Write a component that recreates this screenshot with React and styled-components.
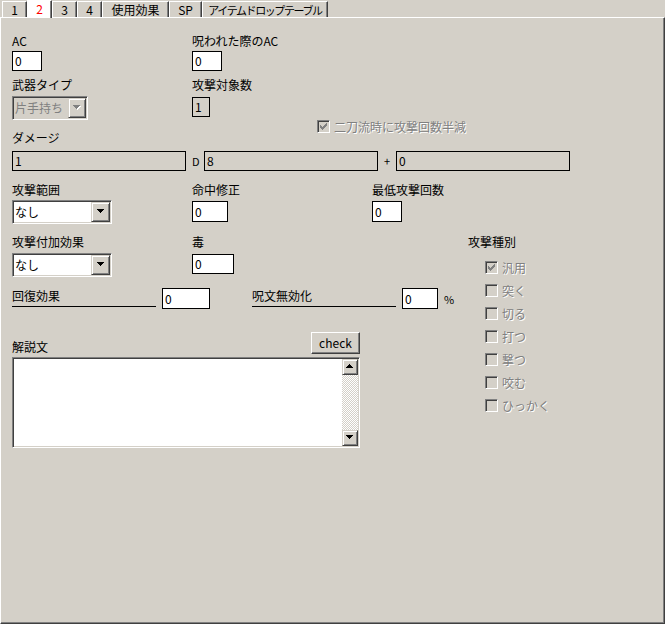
import React from 'react';
import styled, { createGlobalStyle } from 'styled-components';

const FACE = '#d4d0c8';

const GlobalStyle = createGlobalStyle`
  html, body { margin: 0; padding: 0; background: ${FACE}; }
  body {
    font-family: "Noto Sans CJK JP", "Liberation Sans", sans-serif;
    font-size: 12px;
    font-weight: 400;
    color: #000;
  }
  * { box-sizing: border-box; }
`;

const Window = styled.div`
  width: 665px;
  height: 624px;
  display: flex;
  flex-direction: column;
  background: ${FACE};
  overflow: hidden;
`;

const TabBar = styled.div`
  display: flex;
  align-items: flex-end;
  height: 17px;
  padding-left: 2px;
  position: relative;
  z-index: 1;
`;

const Tab = styled.div`
  width: ${(p) => p.$w}px;
  height: ${(p) => (p.$active ? 18 : 16)}px;
  margin-bottom: ${(p) => (p.$active ? -1 : 0)}px;
  display: flex;
  align-items: center;
  justify-content: center;
  border-top: 1px solid #fff;
  border-left: 1px solid #fff;
  border-right: 1px solid #404040;
  box-shadow: inset -1px 0 #808080;
  background: ${(p) => (p.$active ? '#fff' : FACE)};
  color: ${(p) => (p.$active ? '#f00' : '#000')};
  font-size: ${(p) => (p.$tight ? 11 : 12)}px;
  letter-spacing: ${(p) => (p.$tight ? -1.4 : 0)}px;
  line-height: 12px;
  white-space: nowrap;
  padding-bottom: ${(p) => (p.$active ? 2 : 0)}px;
`;

const Panel = styled.div`
  flex: 1;
  border-top: 1px solid #fff;
  border-left: 1px solid #fff;
  border-right: 1px solid #404040;
  border-bottom: 1px solid #404040;
  box-shadow: inset -1px -1px #808080;
  padding: 17px 0 0 11px;
`;

const Row = styled.div`
  display: flex;
  align-items: ${(p) => p.$align || 'flex-start'};
  margin-top: ${(p) => p.$mt ?? 0}px;
  margin-left: ${(p) => p.$ml ?? 0}px;
  gap: ${(p) => p.$gap ?? 0}px;
`;

const Field = styled.div`
  display: flex;
  flex-direction: column;
  flex-shrink: 0;
  width: ${(p) => p.$w}px;
  gap: ${(p) => p.$gap ?? 3}px;
`;

const Label = styled.div`
  height: 13px;
  line-height: 11px;
  white-space: nowrap;
`;

const TextBox = styled.div`
  width: ${(p) => p.$w}px;
  height: ${(p) => p.$h || 20}px;
  border: 1px solid #000;
  background: ${(p) => (p.$flat ? FACE : '#fff')};
  padding-left: 2px;
  display: flex;
  align-items: center;
  line-height: 12px;
  flex-shrink: 0;
`;

const Sunken = styled.div`
  border: 1px solid;
  border-color: #808080 #fff #fff #808080;
  box-shadow: inset 1px 1px #404040, inset -1px -1px ${FACE};
  padding: 1px;
`;

const Combo = styled(Sunken)`
  width: ${(p) => p.$w}px;
  height: ${(p) => p.$h || 24}px;
  display: flex;
  background: ${(p) => (p.$disabled ? FACE : '#fff')};
`;

const ComboText = styled.div`
  flex: 1;
  display: flex;
  align-items: center;
  padding-left: 1px;
  color: ${(p) => (p.$disabled ? '#808080' : '#000')};
  line-height: 12px;
  white-space: nowrap;
`;

const RaisedButton = styled.div`
  width: ${(p) => p.$w || 18}px;
  height: ${(p) => (p.$h ? `${p.$h}px` : 'auto')};
  background: ${FACE};
  border: 1px solid;
  border-color: ${FACE} #404040 #404040 ${FACE};
  box-shadow: inset 1px 1px #fff, inset -1px -1px #808080;
  display: flex;
  align-items: center;
  justify-content: center;
  flex-shrink: 0;
`;

const Arrow = ({ up, disabled }) => (
  <svg width="8" height="6" viewBox="0 0 8 6" shapeRendering="crispEdges">
    {disabled && (
      <path d="M1 1h7v1H7v1H6v1H5v1H4V4H3V3H2V2H1z" fill="#fff" />
    )}
    <path
      d={up ? 'M3 0h1v1h1v1h1v1h1v1H0V3h1V2h1V1h1z' : 'M0 0h7v1H6v1H5v1H4v1H3V3H2V2H1V1H0z'}
      fill={disabled ? '#808080' : '#000'}
    />
  </svg>
);

const DropButton = styled(RaisedButton)`
  height: 100%;
`;

const Sep = styled.div`
  width: 6px;
  text-align: center;
  line-height: 12px;
  align-self: center;
  font-size: 11px;
  flex-shrink: 0;
`;

const CheckItem = styled.div`
  display: flex;
  align-items: center;
  gap: 4px;
  height: 13px;
`;

const Box = styled.div`
  width: 13px;
  height: 13px;
  border: 1px solid;
  border-color: #808080 #fff #fff #808080;
  box-shadow: inset 1px 1px #404040, inset -1px -1px ${FACE};
  background: ${FACE};
  display: flex;
  align-items: center;
  justify-content: center;
  flex-shrink: 0;
`;

const DisabledText = styled.span`
  color: #808080;
  text-shadow: 1px 1px 0 #fff;
  line-height: 12px;
  white-space: nowrap;
`;

const Check = ({ checked, children }) => (
  <CheckItem>
    <Box>
      {checked && (
        <svg width="7" height="7" viewBox="0 0 7 7" shapeRendering="crispEdges">
          <path
            d="M6 0h1v3H6v1H5v1H4v1H3v1H2V6H1V5H0V2h1v1h1v1h1V3h1V2h1V1h1z"
            fill="#808080"
          />
        </svg>
      )}
    </Box>
    <DisabledText>{children}</DisabledText>
  </CheckItem>
);

const UnderLabel = styled.div`
  width: 144px;
  height: 19px;
  padding-top: 2px;
  line-height: 12px;
  border-bottom: 1px solid #000;
  flex-shrink: 0;
`;

const LeftCol = styled.div`
  width: 456px;
  flex-shrink: 0;
`;

const RightCol = styled.div`
  display: flex;
  flex-direction: column;
`;

const CheckList = styled.div`
  display: flex;
  flex-direction: column;
  gap: 10px;
  margin: 12px 0 0 17px;
`;

const MemoHeader = styled.div`
  width: 348px;
  display: flex;
  justify-content: space-between;
  align-items: flex-end;
`;

const PushButton = styled.div`
  width: 49px;
  height: 22px;
  border: 1px solid;
  border-color: #fff #404040 #404040 #fff;
  box-shadow: inset -1px -1px #808080;
  display: flex;
  align-items: center;
  justify-content: center;
  line-height: 12px;
  padding-bottom: 1px;
`;

const Memo = styled(Sunken)`
  width: 348px;
  height: 91px;
  margin-top: 3px;
  display: flex;
  background: #fff;
`;

const MemoArea = styled.div`
  flex: 1;
`;

const ScrollBar = styled.div`
  width: 16px;
  display: flex;
  flex-direction: column;
`;

const ScrollTrack = styled.div`
  flex: 1;
  background: repeating-conic-gradient(#fff 0 25%, ${FACE} 0 50%) 0 0 / 2px 2px;
`;

const tabs = [
  ['1', 25],
  ['2', 25],
  ['3', 25],
  ['4', 25],
  ['使用効果', 67],
  ['SP', 33],
  ['アイテムドロップテーブル', 126, true],
];

const kinds = ['汎用', '突く', '切る', '打つ', '撃つ', '咬む', 'ひっかく'];

export default function App() {
  return (
    <>
      <GlobalStyle />
      <Window>
        <TabBar>
          {tabs.map(([t, w, tight]) => (
            <Tab key={t} $w={w} $active={t === '2'} $tight={tight}>
              {t}
            </Tab>
          ))}
        </TabBar>
        <Panel>
          <Row>
            <Field $w={180} $gap={3}>
              <Label>AC</Label>
              <TextBox $w={30}>0</TextBox>
            </Field>
            <Field $w={180} $gap={3}>
              <Label>呪われた際のAC</Label>
              <TextBox $w={30}>0</TextBox>
            </Field>
          </Row>
          <Row $mt={8}>
            <Field $w={180} $gap={4}>
              <Label>武器タイプ</Label>
              <Combo $w={76} $disabled>
                <ComboText $disabled>片手持ち</ComboText>
                <DropButton $w={18}>
                  <Arrow disabled />
                </DropButton>
              </Combo>
            </Field>
            <Field $w={180} $gap={5}>
              <Label>攻撃対象数</Label>
              <TextBox $w={18} $h={20} $flat>1</TextBox>
            </Field>
          </Row>
          <Row $ml={305}>
            <Check checked>二刀流時に攻撃回数半減</Check>
          </Row>
          <Row $mt={-1}>
            <Field $w={570} $gap={6}>
              <Label>ダメージ</Label>
              <Row $gap={6}>
                <TextBox $w={174} $flat>1</TextBox>
                <Sep>D</Sep>
                <TextBox $w={174} $flat>8</TextBox>
                <Sep>+</Sep>
                <TextBox $w={174} $flat>0</TextBox>
              </Row>
            </Field>
          </Row>
          <Row $mt={13}>
            <Field $w={180} $gap={3}>
              <Label>攻撃範囲</Label>
              <Combo $w={100}>
                <ComboText>なし</ComboText>
                <DropButton $w={19}>
                  <Arrow />
                </DropButton>
              </Combo>
            </Field>
            <Field $w={180} $gap={4}>
              <Label>命中修正</Label>
              <TextBox $w={36} $h={21}>0</TextBox>
            </Field>
            <Field $w={180} $gap={4}>
              <Label>最低攻撃回数</Label>
              <TextBox $w={30} $h={21}>0</TextBox>
            </Field>
          </Row>
          <Row $mt={12}>
            <LeftCol>
              <Row>
                <Field $w={180} $gap={4}>
                  <Label>攻撃付加効果</Label>
                  <Combo $w={100}>
                    <ComboText>なし</ComboText>
                    <DropButton $w={19}>
                      <Arrow />
                    </DropButton>
                  </Combo>
                </Field>
                <Field $w={180} $gap={5}>
                  <Label>毒</Label>
                  <TextBox $w={42}>0</TextBox>
                </Field>
              </Row>
              <Row $mt={11} $gap={6}>
                <UnderLabel>回復効果</UnderLabel>
                <TextBox $w={48} $h={21}>0</TextBox>
                <Row $ml={36} $gap={6}>
                  <UnderLabel>呪文無効化</UnderLabel>
                  <TextBox $w={36} $h={21}>0</TextBox>
                  <Sep>%</Sep>
                </Row>
              </Row>
              <Row $mt={23}>
                <Field $w={348} $gap={0}>
                  <MemoHeader>
                    <Label>解説文</Label>
                    <PushButton>check</PushButton>
                  </MemoHeader>
                  <Memo>
                    <MemoArea />
                    <ScrollBar>
                      <RaisedButton $w={16} $h={16}>
                        <Arrow up />
                      </RaisedButton>
                      <ScrollTrack />
                      <RaisedButton $w={16} $h={16}>
                        <Arrow />
                      </RaisedButton>
                    </ScrollBar>
                  </Memo>
                </Field>
              </Row>
            </LeftCol>
            <RightCol>
              <Label>攻撃種別</Label>
              <CheckList>
                {kinds.map((k, i) => (
                  <Check key={k} checked={i === 0}>
                    {k}
                  </Check>
                ))}
              </CheckList>
            </RightCol>
          </Row>
        </Panel>
      </Window>
    </>
  );
}
